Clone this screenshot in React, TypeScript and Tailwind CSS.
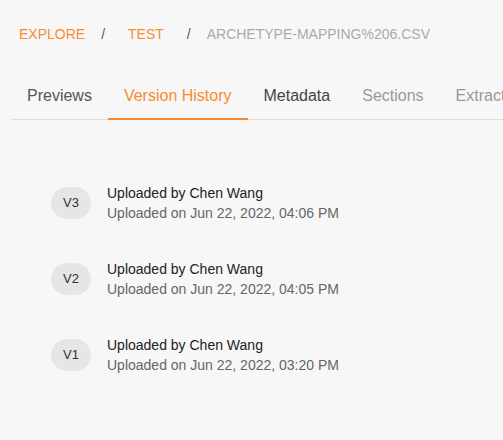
import React from "react";

const versions = [
  { v: "V3", at: "Jun 22, 2022, 04:06 PM" },
  { v: "V2", at: "Jun 22, 2022, 04:05 PM" },
  { v: "V1", at: "Jun 22, 2022, 03:20 PM" },
];

const tabs = [
  { label: "Previews", cls: "text-[#555]" },
  { label: "Version History", cls: "text-[#fa8b2c] border-b-2 border-[#fa8b2c] -mb-px" },
  { label: "Metadata", cls: "text-[#444]" },
  { label: "Sections", cls: "text-[#999]" },
  { label: "Extract", cls: "text-[#999]" },
];

export default function App() {
  return (
    <div className="h-[440px] w-[503px] overflow-hidden bg-[#f7f7f7] font-['Liberation_Sans',Arial,sans-serif]">
      <div className="pl-[11px]">
        <nav className="flex pt-6 pl-2 text-sm leading-5 whitespace-nowrap">
          <span className="text-[#fa8b2c]">EXPLORE</span>
          <span className="mx-4 text-[#555]">/</span>
          <span className="px-[7px] text-[#fa8b2c]">TEST</span>
          <span className="mx-4 text-[#555]">/</span>
          <span className="text-[#aaa]">ARCHETYPE-MAPPING%206.CSV</span>
        </nav>

        <div className="mt-[30px] flex border-b border-[#ddd] whitespace-nowrap">
          {tabs.map((t) => (
            <div key={t.label} className={`px-4 pt-2.5 pb-2.5 text-base leading-6 ${t.cls}`}>
              {t.label}
            </div>
          ))}
        </div>

        <ul className="mt-[63px] flex flex-col gap-9 pl-10">
          {versions.map((r) => (
            <li key={r.v} className="flex items-center gap-4">
              <div className="flex h-8 w-10 items-center justify-center rounded-full bg-[#e6e6e6] text-[13px] text-[#333]">
                {r.v}
              </div>
              <div className="text-sm leading-5">
                <div className="text-[#222]">Uploaded by Chen Wang</div>
                <div className="text-[#666]">Uploaded on {r.at}</div>
              </div>
            </li>
          ))}
        </ul>
      </div>
    </div>
  );
}
